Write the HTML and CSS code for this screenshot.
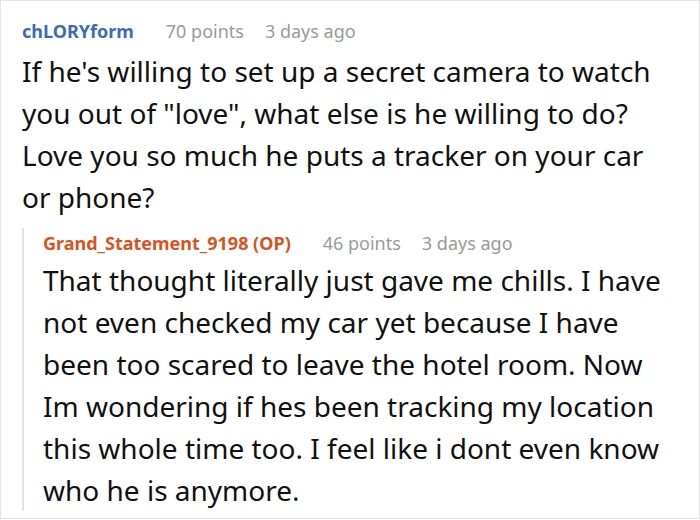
FILE: index.html
```html
<!DOCTYPE html>
<html>
<head>
<meta charset="utf-8">
<link rel="stylesheet" href="styles.css">
</head>
<body>
<div class="card">
  <div class="comment">
    <div class="meta">
      <span class="author">chLORYform</span>
      <span class="info">70 points</span>
      <span class="info">3 days ago</span>
    </div>
    <p class="text">If he's willing to set up a secret camera to watch you out of "love", what else is he willing to do? Love you so much he puts a tracker on your car or phone?</p>
  </div>
  <div class="reply">
    <div class="meta">
      <span class="author op">Grand_Statement_9198 (OP)</span>
      <span class="info">46 points</span>
      <span class="info">3 days ago</span>
    </div>
    <p class="text">That thought literally just gave me chills. I have not even checked my car yet because I have been too scared to leave the hotel room. Now Im wondering if hes been tracking my location this whole time too. I feel like i dont even know who he is anymore.</p>
  </div>
</div>
</body>
</html>
```
FILE: styles.css
```css
html, body {
  margin: 0;
  padding: 0;
  background: #fff;
}
.card {
  box-sizing: border-box;
  width: 700px;
  height: 519px;
  border: 1px solid #e4e4e4;
  padding: 15px 34px 0 21px;
  font-family: "Noto Sans", sans-serif;
  color: #111;
  overflow: hidden;
}
.meta {
  display: flex;
  gap: 21px;
  font-size: 18px;
  line-height: 30px;
}
.author {
  font-weight: bold;
  color: #3a6db3;
  margin-right: 11px;
}
.author.op {
  color: #d9531e;
  margin-right: 11px;
}
.info {
  color: #9a9a9a;
}
.text {
  margin: 4px 0 0;
  font-size: 28px;
  line-height: 42px;
}
.reply {
  margin-top: 24px;
  border-left: 2px solid #e4e4e4;
  padding-left: 19px;
}
.reply .meta {
  margin-top: -14px;
}
.reply .text {
  margin: 1px 0 -10px;
}
```
